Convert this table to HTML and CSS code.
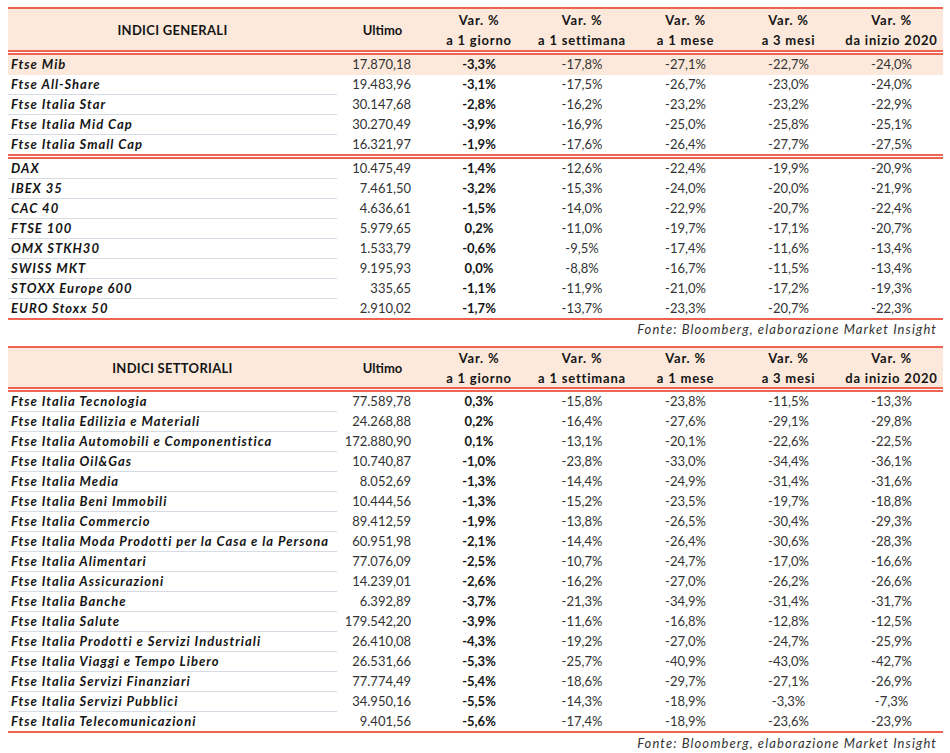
FILE: index.html
```html
<!DOCTYPE html>
<html lang="it">
<head>
<meta charset="utf-8">
<title>Indici</title>
<link rel="stylesheet" href="styles.css">
</head>
<body>
<div class="page">
  <section class="tbl">
    <div class="row head">
      <div class="c t">INDICI GENERALI</div>
      <div class="c u">Ultimo</div>
      <div class="c">Var. %<br>a 1 giorno</div>
      <div class="c">Var. %<br>a 1 settimana</div>
      <div class="c">Var. %<br>a 1 mese</div>
      <div class="c">Var. %<br>a 3 mesi</div>
      <div class="c">Var. %<br>da inizio 2020</div>
    </div>
    <div class="dbl"></div>
    <div class="grp">
      <div class="row hl"><div class="c n">Ftse Mib</div><div class="c v">17.870,18</div><div class="c d">-3,3%</div><div class="c">-17,8%</div><div class="c">-27,1%</div><div class="c">-22,7%</div><div class="c">-24,0%</div></div>
      <div class="row"><div class="c n">Ftse All-Share</div><div class="c v">19.483,96</div><div class="c d">-3,1%</div><div class="c">-17,5%</div><div class="c">-26,7%</div><div class="c">-23,0%</div><div class="c">-24,0%</div></div>
      <div class="row"><div class="c n">Ftse Italia Star</div><div class="c v">30.147,68</div><div class="c d">-2,8%</div><div class="c">-16,2%</div><div class="c">-23,2%</div><div class="c">-23,2%</div><div class="c">-22,9%</div></div>
      <div class="row"><div class="c n">Ftse Italia Mid Cap</div><div class="c v">30.270,49</div><div class="c d">-3,9%</div><div class="c">-16,9%</div><div class="c">-25,0%</div><div class="c">-25,8%</div><div class="c">-25,1%</div></div>
      <div class="row"><div class="c n">Ftse Italia Small Cap</div><div class="c v">16.321,97</div><div class="c d">-1,9%</div><div class="c">-17,6%</div><div class="c">-26,4%</div><div class="c">-27,7%</div><div class="c">-27,5%</div></div>
    </div>
    <div class="dbl"></div>
    <div class="grp">
      <div class="row"><div class="c n">DAX</div><div class="c v">10.475,49</div><div class="c d">-1,4%</div><div class="c">-12,6%</div><div class="c">-22,4%</div><div class="c">-19,9%</div><div class="c">-20,9%</div></div>
      <div class="row"><div class="c n">IBEX 35</div><div class="c v">7.461,50</div><div class="c d">-3,2%</div><div class="c">-15,3%</div><div class="c">-24,0%</div><div class="c">-20,0%</div><div class="c">-21,9%</div></div>
      <div class="row"><div class="c n">CAC 40</div><div class="c v">4.636,61</div><div class="c d">-1,5%</div><div class="c">-14,0%</div><div class="c">-22,9%</div><div class="c">-20,7%</div><div class="c">-22,4%</div></div>
      <div class="row"><div class="c n">FTSE 100</div><div class="c v">5.979,65</div><div class="c d">0,2%</div><div class="c">-11,0%</div><div class="c">-19,7%</div><div class="c">-17,1%</div><div class="c">-20,7%</div></div>
      <div class="row"><div class="c n">OMX STKH30</div><div class="c v">1.533,79</div><div class="c d">-0,6%</div><div class="c">-9,5%</div><div class="c">-17,4%</div><div class="c">-11,6%</div><div class="c">-13,4%</div></div>
      <div class="row"><div class="c n">SWISS MKT</div><div class="c v">9.195,93</div><div class="c d">0,0%</div><div class="c">-8,8%</div><div class="c">-16,7%</div><div class="c">-11,5%</div><div class="c">-13,4%</div></div>
      <div class="row"><div class="c n">STOXX Europe 600</div><div class="c v">335,65</div><div class="c d">-1,1%</div><div class="c">-11,9%</div><div class="c">-21,0%</div><div class="c">-17,2%</div><div class="c">-19,3%</div></div>
      <div class="row"><div class="c n">EURO Stoxx 50</div><div class="c v">2.910,02</div><div class="c d">-1,7%</div><div class="c">-13,7%</div><div class="c">-23,3%</div><div class="c">-20,7%</div><div class="c">-22,3%</div></div>
    </div>
  </section>
  <p class="src src1">Fonte: Bloomberg, elaborazione Market Insight</p>

  <section class="tbl">
    <div class="row head sm">
      <div class="c t">INDICI SETTORIALI</div>
      <div class="c u">Ultimo</div>
      <div class="c">Var. %<br>a 1 giorno</div>
      <div class="c">Var. %<br>a 1 settimana</div>
      <div class="c">Var. %<br>a 1 mese</div>
      <div class="c">Var. %<br>a 3 mesi</div>
      <div class="c">Var. %<br>da inizio 2020</div>
    </div>
    <div class="dbl"></div>
    <div class="grp">
      <div class="row"><div class="c n">Ftse Italia Tecnologia</div><div class="c v">77.589,78</div><div class="c d">0,3%</div><div class="c">-15,8%</div><div class="c">-23,8%</div><div class="c">-11,5%</div><div class="c">-13,3%</div></div>
      <div class="row"><div class="c n">Ftse Italia Edilizia e Materiali</div><div class="c v">24.268,88</div><div class="c d">0,2%</div><div class="c">-16,4%</div><div class="c">-27,6%</div><div class="c">-29,1%</div><div class="c">-29,8%</div></div>
      <div class="row"><div class="c n">Ftse Italia Automobili e Componentistica</div><div class="c v">172.880,90</div><div class="c d">0,1%</div><div class="c">-13,1%</div><div class="c">-20,1%</div><div class="c">-22,6%</div><div class="c">-22,5%</div></div>
      <div class="row"><div class="c n">Ftse Italia Oil&amp;Gas</div><div class="c v">10.740,87</div><div class="c d">-1,0%</div><div class="c">-23,8%</div><div class="c">-33,0%</div><div class="c">-34,4%</div><div class="c">-36,1%</div></div>
      <div class="row"><div class="c n">Ftse Italia Media</div><div class="c v">8.052,69</div><div class="c d">-1,3%</div><div class="c">-14,4%</div><div class="c">-24,9%</div><div class="c">-31,4%</div><div class="c">-31,6%</div></div>
      <div class="row"><div class="c n">Ftse Italia Beni Immobili</div><div class="c v">10.444,56</div><div class="c d">-1,3%</div><div class="c">-15,2%</div><div class="c">-23,5%</div><div class="c">-19,7%</div><div class="c">-18,8%</div></div>
      <div class="row"><div class="c n">Ftse Italia Commercio</div><div class="c v">89.412,59</div><div class="c d">-1,9%</div><div class="c">-13,8%</div><div class="c">-26,5%</div><div class="c">-30,4%</div><div class="c">-29,3%</div></div>
      <div class="row"><div class="c n">Ftse Italia Moda Prodotti per la Casa e la Persona</div><div class="c v">60.951,98</div><div class="c d">-2,1%</div><div class="c">-14,4%</div><div class="c">-26,4%</div><div class="c">-30,6%</div><div class="c">-28,3%</div></div>
      <div class="row"><div class="c n">Ftse Italia Alimentari</div><div class="c v">77.076,09</div><div class="c d">-2,5%</div><div class="c">-10,7%</div><div class="c">-24,7%</div><div class="c">-17,0%</div><div class="c">-16,6%</div></div>
      <div class="row"><div class="c n">Ftse Italia Assicurazioni</div><div class="c v">14.239,01</div><div class="c d">-2,6%</div><div class="c">-16,2%</div><div class="c">-27,0%</div><div class="c">-26,2%</div><div class="c">-26,6%</div></div>
      <div class="row"><div class="c n">Ftse Italia Banche</div><div class="c v">6.392,89</div><div class="c d">-3,7%</div><div class="c">-21,3%</div><div class="c">-34,9%</div><div class="c">-31,4%</div><div class="c">-31,7%</div></div>
      <div class="row"><div class="c n">Ftse Italia Salute</div><div class="c v">179.542,20</div><div class="c d">-3,9%</div><div class="c">-11,6%</div><div class="c">-16,8%</div><div class="c">-12,8%</div><div class="c">-12,5%</div></div>
      <div class="row"><div class="c n">Ftse Italia Prodotti e Servizi Industriali</div><div class="c v">26.410,08</div><div class="c d">-4,3%</div><div class="c">-19,2%</div><div class="c">-27,0%</div><div class="c">-24,7%</div><div class="c">-25,9%</div></div>
      <div class="row"><div class="c n">Ftse Italia Viaggi e Tempo Libero</div><div class="c v">26.531,66</div><div class="c d">-5,3%</div><div class="c">-25,7%</div><div class="c">-40,9%</div><div class="c">-43,0%</div><div class="c">-42,7%</div></div>
      <div class="row"><div class="c n">Ftse Italia Servizi Finanziari</div><div class="c v">77.774,49</div><div class="c d">-5,4%</div><div class="c">-18,6%</div><div class="c">-29,7%</div><div class="c">-27,1%</div><div class="c">-26,9%</div></div>
      <div class="row"><div class="c n">Ftse Italia Servizi Pubblici</div><div class="c v">34.950,16</div><div class="c d">-5,5%</div><div class="c">-14,3%</div><div class="c">-18,9%</div><div class="c">-3,3%</div><div class="c">-7,3%</div></div>
      <div class="row"><div class="c n">Ftse Italia Telecomunicazioni</div><div class="c v">9.401,56</div><div class="c d">-5,6%</div><div class="c">-17,4%</div><div class="c">-18,9%</div><div class="c">-23,6%</div><div class="c">-23,9%</div></div>
    </div>
  </section>
  <p class="src src2">Fonte: Bloomberg, elaborazione Market Insight</p>
</div>
</body>
</html>
```

FILE: styles.css
```css
html, body {
  margin: 0;
  padding: 0;
  background: #ffffff;
}

.page {
  width: 935px;
  padding: 7px 0 0 8px;
  font-family: "Lato", "Liberation Sans", sans-serif;
  font-size: 13px;
  color: #333333;
}

.tbl {
  border-top: 2px solid #ee6450;
  border-bottom: 2px solid #ee6450;
}

.row {
  display: grid;
  grid-template-columns: 329px 91px 102px 104px 103px 103px 103px;
  height: 19px;
  line-height: 19px;
}

.c {
  display: flex;
  align-items: center;
  justify-content: center;
  white-space: nowrap;
}

.grp .row + .row {
  height: 20px;
}

.grp .row + .row > .c {
  border-top: 1px solid transparent;
}

.grp .row + .row > .n {
  border-top-color: #d6dce5;
}

.grp .hl + .row > .c,
.grp .hl + .row > .n {
  border-top-color: #fce9db;
}

.hl {
  background: #fce9db;
}

.n {
  justify-content: flex-start;
  padding-left: 3px;
  font-weight: 700;
  font-style: italic;
  letter-spacing: 1px;
  color: #151515;
}

.v {
  justify-content: flex-end;
  padding-right: 17px;
}

.d {
  font-weight: 700;
  color: #151515;
}

.head {
  height: 41px;
  background: #fce9db;
  line-height: 20px;
}

.head.sm {
  height: 39px;
}

.head .c {
  flex-direction: column;
  text-align: center;
  font-weight: 700;
  letter-spacing: 0.8px;
  color: #151515;
}

.head .c.t {
  letter-spacing: 0.3px;
}

.head .c.u {
  letter-spacing: 0;
}

.dbl {
  height: 1px;
  border-top: 2px solid #ee6450;
  border-bottom: 2px solid #ee6450;
}

.src {
  margin: 0;
  text-align: right;
  padding-right: 6px;
  font-style: italic;
  letter-spacing: 1.1px;
  color: #333333;
}

.src1 {
  height: 26px;
  line-height: 19px;
}

.src2 {
  line-height: 20px;
}
```
